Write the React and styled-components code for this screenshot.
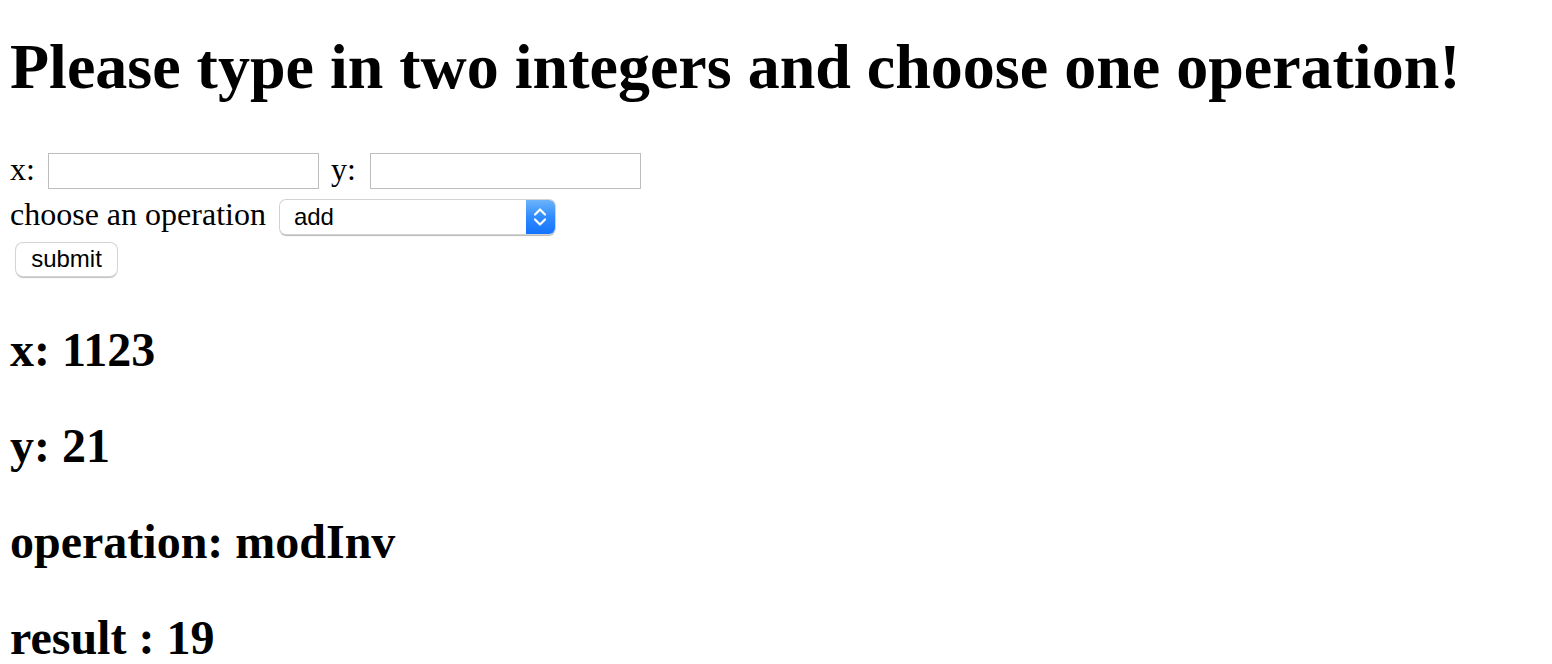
import React from "react";
import styled, { createGlobalStyle } from "styled-components";

const GlobalStyle = createGlobalStyle`
  html, body {
    margin: 0;
    padding: 0;
    background: #ffffff;
    color: #000000;
    font-family: "Liberation Serif", "Times New Roman", serif;
  }
`;

const Page = styled.div`
  padding: 30px 0 0 10px;
`;

const Title = styled.h1`
  margin: 0 0 49px 0;
  font-size: 64px;
  line-height: 74px;
  font-weight: bold;
  white-space: nowrap;
`;

const Form = styled.form`
  display: flex;
  flex-direction: column;
  align-items: flex-start;
`;

const Row = styled.div`
  display: flex;
  align-items: center;
  height: ${(p) => p.$h}px;
  margin-top: ${(p) => p.$mt || 0}px;
`;

const Label = styled.span`
  font-size: 32px;
  line-height: 36px;
  padding-bottom: ${(p) => p.$lift || 5}px;
  margin-right: ${(p) => p.$gap}px;
  white-space: nowrap;
`;

const TextInput = styled.input`
  box-sizing: border-box;
  width: 271px;
  height: 36px;
  border: 1px solid #bdbdbd;
  border-radius: 0;
  padding: 0 4px;
  margin: 0 ${(p) => p.$mr || 0}px 0 0;
  font-size: 22px;
  font-family: "Liberation Sans", Arial, sans-serif;
  background: #fff;
  outline: none;
`;

const SelectBox = styled.div`
  position: relative;
  box-sizing: border-box;
  width: 275px;
  height: 34px;
  border-radius: 6px;
  background: #ffffff;
  box-shadow: 0 0 0 1px #d2d2d2, 0 1.5px 1px rgba(0, 0, 0, 0.28);
  overflow: hidden;
  display: flex;
  align-items: center;
`;

const SelectValue = styled.span`
  flex: 1;
  padding-left: 14px;
  font-family: "Liberation Sans", Arial, sans-serif;
  font-size: 24px;
  color: #000;
`;

const Stepper = styled.span`
  width: 29px;
  height: 100%;
  background: linear-gradient(to bottom, #6cb3fa 0%, #2f8cff 50%, #1473ff 100%);
  display: flex;
  align-items: center;
  justify-content: center;
`;

const SubmitButton = styled.button`
  box-sizing: border-box;
  width: 101px;
  height: 33px;
  margin-left: 6px;
  border: none;
  border-radius: 7px;
  background: #ffffff;
  box-shadow: 0 0 0 1px #d4d4d4, 0 1.5px 1px rgba(0, 0, 0, 0.25);
  font-family: "Liberation Sans", Arial, sans-serif;
  font-size: 24px;
  color: #000;
  padding: 0 0 1px 0;
`;

const Results = styled.div`
  margin-top: 46px;
`;

const ResultLine = styled.h2`
  margin: 0 0 40px 0;
  font-size: 48px;
  line-height: 56px;
  font-weight: bold;
  white-space: nowrap;
`;

const Chevrons = () => (
  <svg width="16" height="24" viewBox="0 0 16 24" fill="none">
    <path d="M3 9.5 L8 4.5 L13 9.5" stroke="#fff" strokeWidth="2.2" strokeLinecap="round" strokeLinejoin="round" />
    <path d="M3 14.5 L8 19.5 L13 14.5" stroke="#fff" strokeWidth="2.2" strokeLinecap="round" strokeLinejoin="round" />
  </svg>
);

export default function App() {
  return (
    <>
      <GlobalStyle />
      <Page>
        <Title>Please type in two integers and choose one operation!</Title>
        <Form onSubmit={(e) => e.preventDefault()}>
          <Row $h={36}>
            <Label $gap={13}>x:</Label>
            <TextInput type="text" $mr={12} />
            <Label $gap={14}>y:</Label>
            <TextInput type="text" />
          </Row>
          <Row $h={34} $mt={11}>
            <Label $gap={14} $lift={7}>choose an operation</Label>
            <SelectBox>
              <SelectValue>add</SelectValue>
              <Stepper>
                <Chevrons />
              </Stepper>
            </SelectBox>
          </Row>
          <Row $h={33} $mt={9}>
            <SubmitButton type="submit">submit</SubmitButton>
          </Row>
        </Form>
        <Results>
          <ResultLine>x: 1123</ResultLine>
          <ResultLine>y: 21</ResultLine>
          <ResultLine>operation: modInv</ResultLine>
          <ResultLine>result : 19</ResultLine>
        </Results>
      </Page>
    </>
  );
}
